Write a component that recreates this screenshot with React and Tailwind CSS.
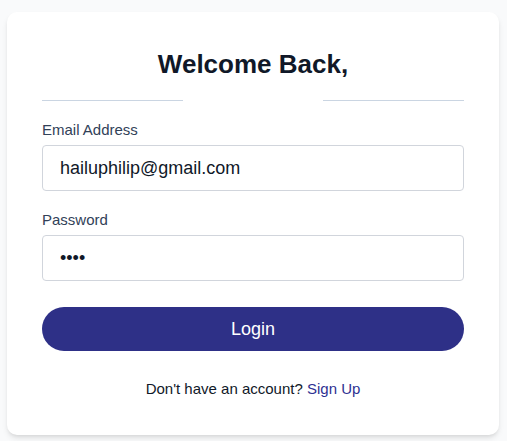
export default function App() {
  return (
    <div className="min-h-[441px] bg-gray-50 pt-3 font-['Liberation_Sans',Arial,sans-serif]">
      <div className="ml-[7px] w-[492px] rounded-[10px] bg-white px-[35px] pt-[36px] pb-[35px] shadow-md">
        <h1 className="text-center text-[26px] leading-[32px] font-bold text-gray-900">Welcome Back,</h1>

        <div className="mt-[20px] grid grid-cols-3">
          <div className="h-px bg-slate-300"></div>
          <div></div>
          <div className="h-px bg-slate-300"></div>
        </div>

        <form className="mt-[18px]">
          <label className="block text-[15px] leading-[22px] text-slate-700">Email Address</label>
          <input
            type="email"
            defaultValue="hailuphilip@gmail.com"
            className="mt-1 block h-[46px] w-full rounded-[4px] border border-gray-300 px-[17px] text-[18px] text-gray-900 outline-none"
          />

          <label className="mt-[18px] block text-[15px] leading-[22px] text-slate-700">Password</label>
          <input
            type="password"
            defaultValue="1234"
            className="mt-1 block h-[46px] w-full rounded-[4px] border border-gray-300 px-[17px] text-[18px] text-gray-900 outline-none"
          />

          <button
            type="button"
            className="mt-[26px] block h-[44px] w-full rounded-full bg-[#2e3087] text-[18px] text-white"
          >
            Login
          </button>
        </form>

        <p className="mt-[27px] text-center text-[15px] leading-[22px] text-gray-900">
          Don't have an account? <a href="#" className="text-[#2e3192]">Sign Up</a>
        </p>
      </div>
    </div>
  )
}
